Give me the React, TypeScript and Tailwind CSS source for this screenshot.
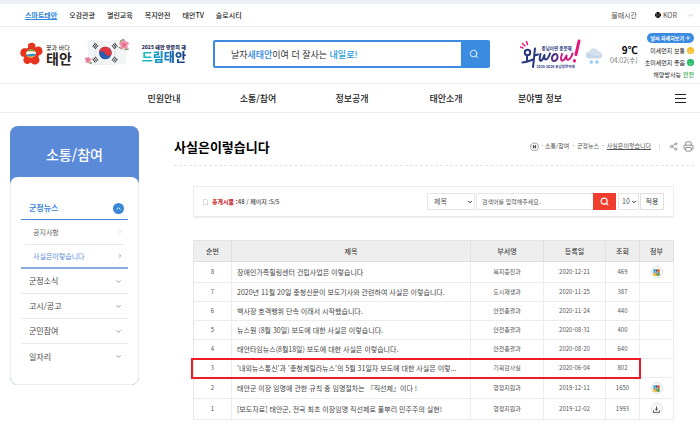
import { ReactNode } from 'react'
import { ChevronDown, ChevronRight, ChevronUp, Globe, Search, Share2, Printer, Plus } from 'lucide-react'

type FileKind = 'hwp' | 'download'

interface Post {
  no: number
  title: string
  dept: string
  date: string
  views: number
  file?: FileKind
  marked?: boolean
}

const posts: Post[] = [
  { no: 8, title: '장애인가족힐링센터 건립사업은 이렇습니다', dept: '복지증진과', date: '2020-12-21', views: 469, file: 'hwp' },
  { no: 7, title: '2020년 11월 20일 충청신문이 보도기사와 관련하여 사실은 이렇습니다.', dept: '도시재생과', date: '2020-11-25', views: 387 },
  { no: 6, title: '백사장 호객행위 단속 이래서 시작했습니다.', dept: '안전총괄과', date: '2020-11-24', views: 440 },
  { no: 5, title: '뉴스원 (8월 30일) 보도에 대한 사실은 이렇습니다.', dept: '안전총괄과', date: '2020-08-31', views: 400 },
  { no: 4, title: '태안타임뉴스(8월18일) 보도에 대한 사실은 이렇습니다.', dept: '안전총괄과', date: '2020-08-20', views: 640 },
  { no: 3, title: "'내외뉴스통신'과 '충청계릴라뉴스'의 5월 31일자 보도에 대한 사실은 이렇...", dept: '기획감사실', date: '2020-06-04', views: 802, marked: true },
  { no: 2, title: '태안군 이장 임명에 관한 규칙 중 임명절차는 『직선제』이다 !', dept: '행정지원과', date: '2019-12-11', views: 1650, file: 'hwp' },
  { no: 1, title: '[보도자료] 태안군, 전국 최초 이장임명 직선제로 풀뿌리 민주주의 실현!', dept: '행정지원과', date: '2019-12-02', views: 1993, file: 'download' },
]

const topLinks = ['오감관광', '열린교육', '복지안전', '태안TV', '슬로시티']
const mainMenu = ['민원안내', '소통/참여', '정보공개', '태안소개', '분야별 정보']
const sideMenu = ['군정소식', '고시/공고', '군민참여', '일자리']

function TopBar() {
  return (
    <div className="flex h-[23px] items-center justify-between border-b border-[#f0f0f0] pl-[25px] pr-[6px] text-[7px] leading-none">
      <nav className="flex items-center gap-[12px] font-medium text-[#222]">
        <a href="#" className="font-bold text-[#2f86dc] underline">스마트태안</a>
        {topLinks.map((link) => (
          <a key={link} href="#">{link}</a>
        ))}
      </nav>
      <div className="flex items-center text-[#555]">
        <a href="#" className="mr-[18px]">물때시간</a>
        <button type="button" className="flex items-center gap-[2px]">
          <Globe className="size-[6px] text-black" strokeWidth={4} />
          KOR
          <ChevronDown className="ml-2 size-[7px] text-[#aaa]" strokeWidth={2} />
        </button>
      </div>
    </div>
  )
}

function FlowerLogo() {
  return (
    <svg viewBox="0 0 46 48" className="h-6 w-[23px]">
      <g fill="#e8331f">
        <path d="M16 6c1-5 9-6 13-3 3 3 1 7 3 10H15c2-2 1-4 1-7z" />
        <path d="M30 12c3-3 9-4 12-1 4 4 4 11 0 14-3 2-6 2-8 4z" />
        <path d="M35 25c-1 4 4 6 4 11 0 6-6 10-11 9-4-1-5-4-8-5z" />
        <path d="M26 38c-4 1-6 6-11 6-6 0-9-5-8-10 1-4 4-5 4-9z" />
        <path d="M12 30c-3-1-7 1-10-3-3-5-1-12 4-14 4-1 7 1 11-1z" />
        <circle cx="23" cy="25" r="15" />
      </g>
      <ellipse cx="22" cy="23" rx="10" ry="8" fill="#f7e7a0" />
      <path d="M13 20c3-6 15-7 18 0-5-3-13-3-18 0z" fill="#5fa23c" />
      <path d="M13 21c5-4 7 0 10-1 3-1 5-2 9 2l-2 3c-6-2-11 2-17-1z" fill="#fff" />
      <path d="M12 24c6 3 11-2 20 0-2 8-17 9-20 0z" fill="#2b8fc6" />
      <path d="M14 28c5 2 10 1 15-1-3 5-11 6-15 1z" fill="#f5b21c" />
    </svg>
  )
}

function Blossom({ x, y, r }: { x: number; y: number; r: number }) {
  return (
    <g transform={`translate(${x} ${y}) scale(${r})`}>
      {[0, 72, 144, 216, 288].map((angle) => (
        <ellipse key={angle} cx="0" cy="-5" rx="4" ry="5" fill="#ee8fab" transform={`rotate(${angle})`} />
      ))}
      <circle r="3" fill="#d8436f" />
      <circle r="1.2" fill="#f9dc6b" />
    </g>
  )
}

function Trigram({ x, y, angle }: { x: number; y: number; angle: number }) {
  return (
    <g transform={`translate(${x} ${y}) rotate(${angle})`} stroke="#333" strokeWidth="2.8">
      <path d="M-7-5H7M-7 0H7M-7 5H7" />
      <path d="M0-7V7" stroke="#f3f4f5" strokeWidth="1" />
    </g>
  )
}

function FlagLogo() {
  return (
    <svg viewBox="0 0 138 90" className="h-[30px] w-[46px]">
      <path d="M12 12c20-6 38 5 62 1 20-4 34-3 50 0v68c-18-4-34 5-56 2-20-3-36 4-54-3z" fill="#f3f4f5" stroke="#dfe2e5" />
      <path d="M30 12c8 20-3 45 2 70M92 12c8 24-4 46 2 68" stroke="#e5e8eb" strokeWidth="4" fill="none" />
      <circle cx="64" cy="48" r="19" fill="#2c5dad" />
      <path d="M45 46a19 19 0 0 1 38 5c-4 8-15 7-19-1-4-8-15-10-19-4z" fill="#e0343f" />
      <Trigram x={34} y={27} angle={-52} />
      <Trigram x={92} y={27} angle={52} />
      <Trigram x={34} y={68} angle={52} />
      <Trigram x={92} y={68} angle={-52} />
      <path d="M108 14l12-8M122 38l12-2M104 30l10 6M4 62l6 8M16 78l8 0" stroke="#6ea05a" strokeWidth="4" fill="none" />
      <Blossom x={120} y={23} r={1.5} />
      <Blossom x={12} y={69} r={1} />
    </svg>
  )
}

function WowLogo() {
  return (
    <svg viewBox="0 0 126 60" className="h-[30px] w-[63px]">
      <g fontFamily="'Noto Sans CJK KR', sans-serif" fontWeight="700" fill="#27367e">
        <text x="43" y="22" fontSize="9">충남이면 충분해</text>
        <text x="33" y="57" fontSize="7">2025-2026 충남방문의해</text>
      </g>
      <g fill="none" strokeLinecap="round" strokeLinejoin="round">
        <path d="M1 16l5 2M5 9l5 5M13 5l2 6" stroke="#e5187c" strokeWidth="3" />
        <circle cx="15" cy="27" r="5.5" stroke="#27367e" strokeWidth="4" />
        <path d="M14 34v9M5 47c8-1 14-3 21-6M30 19c-2 13-2 25-4 37M29 33l7-2" stroke="#27367e" strokeWidth="4" />
        <path d="M41 30c-4 15 1 17 5 9l3-7c-2 11 5 14 11-3" stroke="#27367e" strokeWidth="4" />
        <path d="M70 30c-8 3-8 15-1 14 8-2 8-15 1-14" stroke="#553083" strokeWidth="4" />
        <path d="M84 30c-5 14 1 17 6 9l3-6c-2 12 7 12 12-4" stroke="#c91c7e" strokeWidth="4" />
        <path d="M118 4l-6 27M109 43v1" stroke="#e5187c" strokeWidth="6" />
      </g>
    </svg>
  )
}

function WeatherIcon() {
  return (
    <svg viewBox="0 0 54 54" className="size-[18px]">
      <path d="M12 34a10 10 0 0 1 1-20c3-13 22-14 26-2 16 2 16 22 2 22z" fill="#d4e0ee" />
      <path d="M12 34a10 10 0 0 1-5-18c8 12 28 14 45 8 0 6-5 10-11 10z" fill="#c7d6e8" />
      <circle cx="19" cy="45" r="5" fill="#8ecbf5" />
      <circle cx="36" cy="45" r="5" fill="#8ecbf5" />
    </svg>
  )
}

function Face({ color }: { color: string }) {
  return (
    <svg viewBox="0 0 18 18" className="size-[7px]">
      <circle cx="9" cy="9" r="9" fill={color} />
      <path d="M5 10c1 5 7 5 8 0M6 5v2M12 5v2" stroke="#fff" strokeWidth="1.5" fill="none" />
    </svg>
  )
}

function Header() {
  return (
    <div className="flex h-[57px] items-center border-b border-[#f0f0f0] pb-[2px] pl-5 pr-[6px]">
      <a href="#" className="flex shrink-0 items-center gap-[3px]">
        <FlowerLogo />
        <span className="flex flex-col leading-none text-[#2b2320]">
          <span className="text-[6px] leading-[8px]">꽃과 바다</span>
          <span className="text-[14px] font-bold leading-[13px]">태안</span>
        </span>
      </a>
      <span className="ml-3 shrink-0 pb-1"><FlagLogo /></span>
      <a href="#" className="ml-3 flex shrink-0 flex-col pb-[3px] font-black leading-none">
        <span className="text-[5px] leading-[7px] text-[#1e2b55]">2025 태안 방문의 해</span>
        <span className="bg-linear-to-r from-[#22c3bb] via-[#1687c8] to-[#17327f] bg-clip-text text-[12px] leading-[13px] text-transparent">드림태안</span>
      </a>
      <form className="ml-[27px] flex h-7 min-w-0 flex-1 overflow-hidden rounded-xs border-2 border-[#3b8be0]">
        <label className="flex flex-1 items-center pl-4 text-[9px] leading-none text-[#333]">
          <span className="whitespace-nowrap">
            날자<b className="font-medium text-[#2f86dc]">새태안</b>이여 더 잘사는 <b className="font-medium text-[#1b98d8]">내일로!</b>
          </span>
          <input type="text" aria-label="통합검색" className="w-0 min-w-0 flex-1 outline-none" />
        </label>
        <button type="button" aria-label="검색" className="flex w-[27px] items-center justify-center bg-[#3b8be0] text-white">
          <Search className="size-[10px]" strokeWidth={2} />
        </button>
      </form>
      <div className="ml-[30px] flex shrink-0 items-center">
        <WowLogo />
        <span className="ml-[2px] pt-1"><WeatherIcon /></span>
        <div className="ml-[7px] flex w-7 flex-col items-end leading-none text-[#333]">
          <span className="text-[10px] font-bold leading-[11px] text-black">9℃</span>
          <span className="text-[7px] font-light leading-[10px]">04.02(수)</span>
        </div>
        <div className="ml-[7px] flex flex-col items-end gap-[5px] pt-[2px] text-[6px] leading-[7px] text-[#222]">
          <a href="#" className="-mb-px flex h-[10px] items-center gap-px rounded-full bg-[#3b8be0] px-[3px] text-[5px] font-bold text-white">
            날씨 자세히보기 <Plus className="size-[6px]" strokeWidth={3} />
          </a>
          <span className="flex items-center gap-[2px]">미세먼지 보통 <Face color="#f7bb1f" /></span>
          <span className="flex items-center gap-[2px]">초미세먼지 좋음 <Face color="#18b85c" /></span>
          <span className="flex items-center gap-[2px]">해양방사능 <b className="font-medium text-[#3aa63f]">안전</b></span>
        </div>
      </div>
    </div>
  )
}

function MainNav() {
  return (
    <div className="flex h-[29px] items-center border-b border-[#eee] pl-[117px] pr-[14px]">
      <nav className="flex text-[9px] font-medium leading-none text-[#222]">
        {mainMenu.map((item) => (
          <a key={item} href="#" className="w-[94px] text-center">{item}</a>
        ))}
      </nav>
      <button type="button" aria-label="전체메뉴" className="ml-auto flex w-[11px] flex-col gap-[3px]">
        <span className="h-px bg-[#222]" />
        <span className="h-px bg-[#222]" />
        <span className="h-px bg-[#222]" />
      </button>
    </div>
  )
}

function Sidebar() {
  return (
    <aside className="w-[129px] shrink-0 rounded-lg bg-[#5b8ad9] leading-none">
      <h2 className="flex h-[51px] items-center justify-center pt-1 text-[14px] font-medium text-white">소통/참여</h2>
      <div className="h-[208px] rounded-lg border border-t-0 border-[#eee] bg-white px-[10px] pt-5 text-[8px] text-[#444]">
        <a href="#" className="flex h-[23px] items-center justify-between border-b border-[#4f86dc] px-2 pr-1 font-bold text-[#3b86d8]">
          군정뉴스
          <span className="flex size-[11px] items-center justify-center rounded-full bg-[#3b86d8]">
            <ChevronUp className="size-[7px] text-white" strokeWidth={3} />
          </span>
        </a>
        <div className="border-b-2 border-[#8aabe0] px-1 text-[7px] text-[#666]">
          <a href="#" className="flex h-[25px] items-center justify-between border-b border-[#e6e6e6] pl-2 pr-px">
            공지사항
            <ChevronRight className="size-[6px] text-[#bbb]" />
          </a>
          <a href="#" className="flex h-[22px] items-center justify-between pl-2 pr-px text-[#5b8ad9]">
            사실은이렇습니다
            <ChevronRight className="size-[6px]" strokeWidth={3} />
          </a>
        </div>
        {sideMenu.map((item) => (
          <a key={item} href="#" className="flex h-[25px] items-center justify-between border-b border-[#e9e9e9] pl-2 pr-[6px] last:border-b-0">
            {item}
            <ChevronDown className="size-[7px] text-[#888]" strokeWidth={3} />
          </a>
        ))}
      </div>
    </aside>
  )
}

function PageTitle() {
  return (
    <div className="flex h-10 items-center justify-between border-b border-dashed border-[#e3e3e3] pt-px">
      <h1 className="text-[13px] font-bold leading-none text-black">사실은이렇습니다</h1>
      <div className="flex items-center text-[6px] leading-none text-[#555]">
        <svg viewBox="0 0 24 24" className="size-[9px]" fill="none" stroke="#888" strokeWidth="2">
          <path d="M7 3h10l5 5v10l-4 4H6l-4-4V8z" />
          <path d="M9 8v9M15 8v9M9 13h6" stroke="#333" strokeWidth="2.5" />
        </svg>
        <span className="mx-[2px]">·</span>
        <a href="#">소통/참여</a>
        <span className="mx-[3px]">·</span>
        <a href="#">군정뉴스</a>
        <span className="mx-[3px]">·</span>
        <a href="#" className="underline">사실은이렇습니다</a>
        <span className="ml-2 mr-[9px] h-[5px] w-px bg-[#ddd]" />
        <button type="button" aria-label="공유"><Share2 className="size-[9px] text-[#888]" strokeWidth={2} /></button>
        <button type="button" aria-label="인쇄" className="ml-[5px]"><Printer className="size-[11px] text-[#888]" strokeWidth={2} /></button>
      </div>
    </div>
  )
}

function SelectBox({ label, value, className }: { label: string; value: string; className: string }) {
  return (
    <span className={`relative flex ${className}`}>
      <select aria-label={label} className="h-[17px] w-full appearance-none border border-[#e5e5e5] bg-white text-[#555]">
        <option>{value}</option>
      </select>
      <ChevronDown className="pointer-events-none absolute right-[2px] top-[6px] size-[6px] text-[#333]" strokeWidth={4} />
    </span>
  )
}

function FilterBar() {
  return (
    <form className="flex h-8 items-center justify-between border border-b-2 border-[#ececec] px-[9px] text-[7px] leading-none">
      <p className="flex items-center text-[6px] font-medium text-[#444]">
        <svg viewBox="0 0 15 18" className="mr-1 h-[6px] w-[5px]" fill="none" stroke="#bbb" strokeWidth="2">
          <path d="M1 1h9l4 4v12H1z" />
        </svg>
        <b className="text-[#c4161c]">총게시물 :</b>48 / 페이지 :5/5
      </p>
      <div className="flex items-center">
        <SelectBox label="검색구분" value="제목" className="mr-px w-12 [&>select]:px-[6px]" />
        <input
          type="text"
          aria-label="검색어"
          placeholder="검색어를 입력해주세요."
          className="h-[17px] w-[117px] border border-r-0 border-[#e5e5e5] px-[5px] text-[6px] text-[#555] outline-none placeholder:text-[#555]"
        />
        <button type="button" aria-label="검색" className="flex h-[17px] w-[23px] items-center justify-center bg-[#ef3e2e] text-white">
          <Search className="size-[9px]" strokeWidth={3} />
        </button>
        <SelectBox label="목록수" value="10" className="ml-[2px] w-[21px] [&>select]:px-[3px]" />
        <button type="button" className="ml-px h-[17px] w-6 border border-[#e0e0e0] text-[#444]">적용</button>
      </div>
    </form>
  )
}

function FileIcon({ kind }: { kind: FileKind }) {
  return (
    <a href="#" aria-label="첨부파일" className="mx-auto flex size-3 items-center justify-center rounded-full border border-[#ddd] bg-white">
      {kind === 'hwp' ? (
        <svg viewBox="0 0 20 20" className="size-[7px]">
          <path d="M1 1h12v5H6v7H1z" fill="#39a9dc" />
          <path d="M11 1h8v10h-5V6h-3z" fill="#e8582d" />
          <path d="M1 11h5v4h6v4H1z" fill="#f6b91d" />
          <path d="M14 10h5v9h-8v-4h3z" fill="#3d9b4b" />
          <path d="M7 6h6M10 4v3M7 14h6" stroke="#234" strokeWidth="2" />
          <circle cx="10" cy="10" r="2.2" fill="none" stroke="#234" strokeWidth="1.6" />
        </svg>
      ) : (
        <svg viewBox="0 0 20 20" className="size-[7px]" fill="none" stroke="#333" strokeWidth="2.4">
          <path d="M10 1v11M6 8l4 4 4-4M1 12v6h18v-6" />
        </svg>
      )}
    </a>
  )
}

function Cell({ children, className = '' }: { children?: ReactNode; className?: string }) {
  return <td className={`border-b border-r border-[#ebebf0] p-0 ${className}`}>{children}</td>
}

function PostTable() {
  return (
    <table className="w-full table-fixed border-separate border-spacing-0 border-l border-t border-[#e4e4e8] text-center text-[6px] leading-none text-[#555]">
      <colgroup>
        <col className="w-[38px]" />
        <col />
        <col className="w-[73px]" />
        <col className="w-[62px]" />
        <col className="w-[34px]" />
        <col className="w-[34px]" />
      </colgroup>
      <thead>
        <tr className="h-[21px] bg-[#eee] text-[7px] text-[#444]">
          {['순번', '제목', '부서명', '등록일', '조회', '첨부'].map((head) => (
            <th key={head} scope="col" className="border-b border-r border-[#e0e0e0] p-0 font-medium">{head}</th>
          ))}
        </tr>
      </thead>
      <tbody>
        {posts.map((post) => (
          <tr key={post.no} className={post.file ? 'h-[21px]' : 'h-[19px]'}>
            <Cell className="relative">
              {post.no}
              {post.marked && (
                <span className="pointer-events-none absolute -left-[3px] -top-px z-10 h-[21px] w-[calc(100vw-250px)] border-2 border-[#ee1c25]" />
              )}
            </Cell>
            <Cell className="truncate pl-[5px] text-left text-[7px] text-[#444]">
              <a href="#">{post.title}</a>
            </Cell>
            <Cell>{post.dept}</Cell>
            <Cell>{post.date}</Cell>
            <Cell>{post.views}</Cell>
            <Cell>{post.file && <FileIcon kind={post.file} />}</Cell>
          </tr>
        ))}
      </tbody>
    </table>
  )
}

export default function App() {
  return (
    <div lang="ko" className="min-h-screen bg-white font-['Noto_Sans_CJK_KR',sans-serif]">
      <div className="h-1 bg-[#edf1f7]" />
      <header>
        <TopBar />
        <Header />
        <MainNav />
      </header>
      <div className="flex items-start gap-[35px] pl-[10px] pr-[6px] pt-[13px]">
        <Sidebar />
        <main className="min-w-0 flex-1">
          <PageTitle />
          <div className="flex flex-col gap-[22px] pl-[19px] pr-5 pt-5">
            <FilterBar />
            <PostTable />
          </div>
        </main>
      </div>
    </div>
  )
}
